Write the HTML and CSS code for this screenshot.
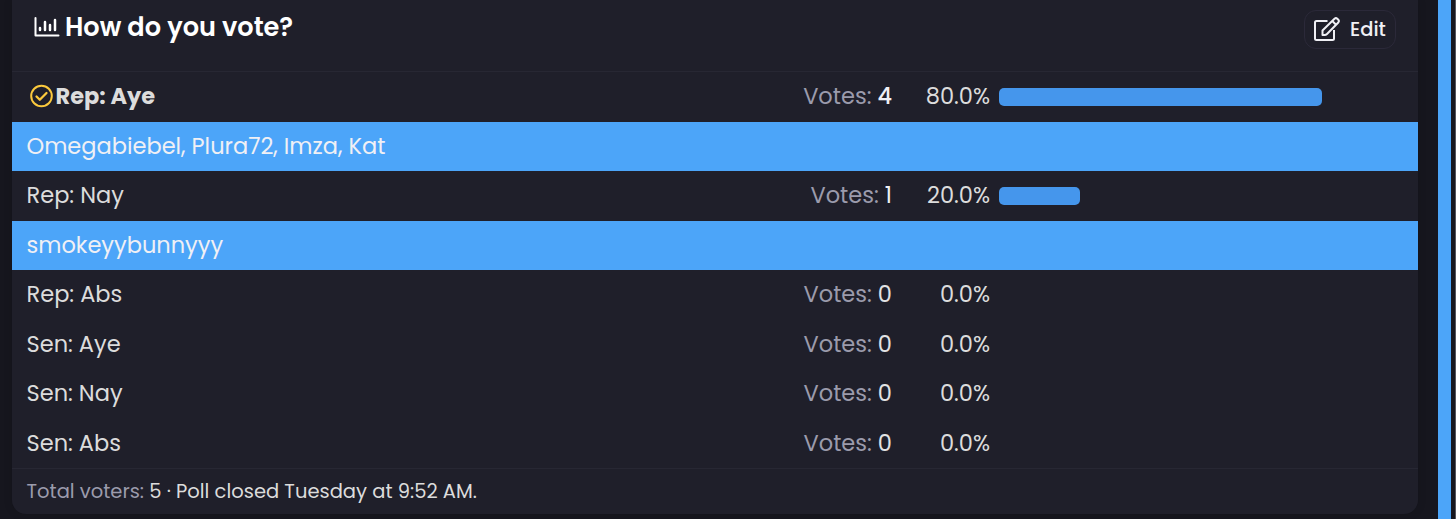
FILE: index.html
```html
<!DOCTYPE html>
<html lang="en">
<head>
    <meta charset="UTF-8">
    <meta name="viewport" content="width=device-width, initial-scale=1.0">
    <title>How do you vote?</title>
    <link rel="stylesheet" href="styles.css">
</head>
<body>

    <div class="page">
        <div class="poll">
            <div class="poll-header">
                <h2 class="poll-title">
                    <svg class="icon-chart" viewBox="0 0 26 20" fill="none" stroke="currentColor" stroke-width="2" stroke-linecap="round" stroke-linejoin="round">
                        <path d="M1.5 1v17.5H24.5"/>
                        <path stroke-width="2.5" d="M6 13v-2M11 13V5M16 13V8M21 13V3"/>
                    </svg>
                    <span class="title-text">How do you vote?</span>
                </h2>
                <button class="edit">
                    <svg class="icon-edit" viewBox="0 0 26 24" fill="none" stroke="currentColor" stroke-width="2" stroke-linejoin="round">
                        <path d="M13.5 4H2.5Q1 4 1 5.5V21.5Q1 23 2.500 23H18.500Q20 23 20 21.5V13"/>
                        <path d="M8.5 18V13.500L20.500 1.7Q22 .5 23.300 1.7L24.300 2.7Q25.500 4 24.300 5.5L13 17Q12 18 10.500 18ZM18.300 4L22 7.700"/>
                    </svg>
                    <span class="edit-text">Edit</span>
                </button>
            </div>

            <ul class="results">
                <li class="row voted">
                    <span class="label">
                        <svg class="icon-check" viewBox="0 0 24 24" fill="none" stroke="currentColor" stroke-width="2" stroke-linecap="round" stroke-linejoin="round">
                            <circle cx="11.5" cy="12" r="10.3"/>
                            <path stroke-width="2.3" d="M6.5 12.5l3.3 3.300L16.500 9"/>
                        </svg>
                        <span class="choice">Rep: Aye</span>
                    </span>
                    <span class="votes">Votes: <b>4</b></span>
                    <span class="percent">80.0%</span>
                    <span class="track"><span class="bar" style="width: 80%"></span></span>
                </li>
                <li class="voters"><span class="names">Omegabiebel, Plura72, Imza, Kat</span></li>
                <li class="row">
                    <span class="label">Rep: Nay</span>
                    <span class="votes">Votes: <b>1</b></span>
                    <span class="percent">20.0%</span>
                    <span class="track"><span class="bar" style="width: 20%"></span></span>
                </li>
                <li class="voters"><span class="names">smokeyybunnyyy</span></li>
                <li class="row">
                    <span class="label">Rep: Abs</span>
                    <span class="votes none">Votes: <b>0</b></span>
                    <span class="percent">0.0%</span>
                </li>
                <li class="row">
                    <span class="label">Sen: Aye</span>
                    <span class="votes none">Votes: <b>0</b></span>
                    <span class="percent">0.0%</span>
                </li>
                <li class="row">
                    <span class="label">Sen: Nay</span>
                    <span class="votes none">Votes: <b>0</b></span>
                    <span class="percent">0.0%</span>
                </li>
                <li class="row">
                    <span class="label">Sen: Abs</span>
                    <span class="votes none">Votes: <b>0</b></span>
                    <span class="percent">0.0%</span>
                </li>
            </ul>

            <div class="poll-footer"><span class="muted">Total voters:</span> 5 · Poll closed Tuesday at 9:52 AM.</div>
        </div>
        <div class="stripe"></div>
    </div>

</body>
</html>
```

FILE: styles.css
```css
* { box-sizing: border-box; }
body { margin: 0; height: 519px; overflow: hidden; background: #16161e; color: #dcdcdc; font-family: Poppins, Inter, sans-serif; }
.page { display: flex; height: 519px; padding-left: 12px; border-right: 1px solid #55555c; }
.poll { width: 1406px; height: 514px; background: #1f1f2a; border-radius: 0 0 14px 14px; box-shadow: 0 0 10px rgba(0, 0, 0, 0.12); }
.stripe { width: 13px; margin-left: 20px; background: #4ca5f9; }

.poll-header { display: flex; justify-content: space-between; align-items: flex-start; height: 72px; padding: 10px 22px 0 22px; border-bottom: 1px solid #272733; }
.poll-title { display: flex; gap: 5px; align-items: center; margin: 0; height: 35px; color: #fff; font-size: 25.6px; font-weight: 600; }
.icon-chart { width: 26px; height: 20px; margin-top: -2px; }
.edit { display: flex; gap: 10px; align-items: center; width: 92px; height: 39px; padding: 0 0 0 9px; border: 1px solid #2b2939; border-radius: 12px; background: transparent; color: #f0f0f5; font-family: inherit; font-size: 19.5px; font-weight: 500; }
.icon-edit { width: 26px; height: 24px; margin-top: -2px; }

.results { margin: 0; padding: 0; list-style: none; font-size: 22.5px; }
.row { display: grid; grid-template-columns: 680.5px 185px 98px 404px; align-items: center; height: 49.5px; padding-left: 14.5px; }
.label { display: flex; align-items: center; }
.label, .votes, .percent { padding-bottom: 1px; }
.voted .label { padding-left: 3px; gap: 2px; font-weight: 700; }
.icon-check { width: 24px; height: 24px; color: #fbc93d; }
.votes { text-align: right; color: #9b9bac; }
.votes b { color: #f0f0f5; font-weight: 400; }
.voted .votes b { font-weight: 500; }
.votes.none b { color: #e2e2e4; }
.percent { text-align: right; }
.track { height: 18px; margin-left: 9px; width: 404px; }
.bar { display: block; height: 18px; border-radius: 5px; background: #4596ec; }
.voters { display: flex; align-items: center; height: 49.5px; padding-left: 14.5px; background: #4ca5f9; color: #f0f0f5; }

.poll-footer { height: 46px; padding-left: 14.5px; border-top: 1px solid #272733; font-size: 19.5px; line-height: 45px; }
.muted { color: #9b9bac; }
```
